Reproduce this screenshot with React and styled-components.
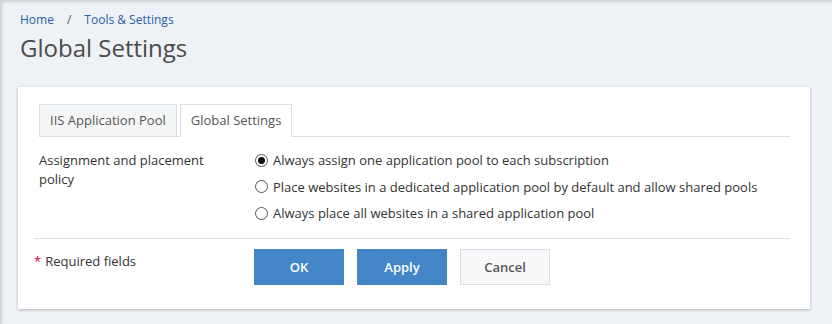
import React from 'react'
import styled, { createGlobalStyle } from 'styled-components'

const Global = createGlobalStyle`
  html, body { margin: 0; padding: 0; }
  body {
    background: #eef1f5;
    font-family: "Open Sans", "Noto Sans", sans-serif;
    font-size: 13px;
    color: #333;
  }
`

const Page = styled.div`
  width: 832px;
  height: 324px;
  box-sizing: border-box;
  padding: 12px 22px 0 18px;
  box-shadow: inset 2px 2px 3px rgba(0, 0, 0, 0.14);
`

const Crumbs = styled.div`
  display: flex;
  gap: 13px;
  padding-left: 2px;
  font-size: 12px;
  line-height: 16px;
  color: #2a60a3;
  span.sep { color: #555; }
`

const Title = styled.h1`
  margin: 3px 0 0 2px;
  font-size: 24px;
  font-weight: 400;
  line-height: 34px;
  color: #4b4b4b;
`

const Card = styled.div`
  margin-top: 22px;
  background: #fff;
  box-shadow: 0 1px 3px rgba(0, 0, 0, 0.25);
  padding: 17px 20px 0 21px;
  height: 222px;
  box-sizing: border-box;
`

const Tabs = styled.div`
  display: flex;
  gap: 3px;
  border-bottom: 1px solid #dcdfe4;
`

const Tab = styled.div`
  padding: 0 10px;
  height: 31px;
  line-height: 31px;
  border: 1px solid #dcdfe4;
  border-bottom: none;
  margin-bottom: -1px;
  background: ${p => (p.active ? '#fff' : '#f4f5f7')};
  color: #555;
  ${p => p.active && 'height: 32px;'}
`

const Row = styled.div`
  display: grid;
  grid-template-columns: 216px 1fr;
  padding-top: 14px;
`

const Label = styled.div`
  line-height: 19px;
  color: #333;
  width: 180px;
`

const Options = styled.div`
  display: flex;
  flex-direction: column;
  gap: 8.5px;
`

const Option = styled.label`
  display: flex;
  align-items: center;
  gap: 5px;
  line-height: 18px;
  color: #333;
`

const Radio = styled.span`
  width: 11px;
  height: 11px;
  border: 1px solid #555;
  border-radius: 50%;
  display: flex;
  align-items: center;
  justify-content: center;
  background: #fff;
  &::after {
    content: '';
    width: 7px;
    height: 7px;
    border-radius: 50%;
    background: ${p => (p.checked ? '#111' : 'transparent')};
  }
`

const Divider = styled.div`
  height: 1px;
  background: #dcdfe4;
  margin: 16px 0 0 -5px;
`

const Footer = styled.div`
  display: grid;
  grid-template-columns: 215px 1fr;
  padding-top: 10px;
`

const Required = styled.div`
  margin-left: -5px;
  padding-top: 3px;
  line-height: 18px;
  b { color: #d0021b; font-weight: 400; margin-right: 4px; }
`

const Buttons = styled.div`
  display: flex;
  gap: 13px;
`

const Button = styled.button`
  width: 90px;
  height: 36px;
  font-family: inherit;
  font-size: 13px;
  font-weight: 600;
  border: 1px solid ${p => (p.primary ? '#4286c7' : '#dcdfe4')};
  background: ${p => (p.primary ? '#4286c7' : '#f7f8fa')};
  color: ${p => (p.primary ? '#fff' : '#555')};
  cursor: pointer;
  padding: 0;
`

const options = [
  'Always assign one application pool to each subscription',
  'Place websites in a dedicated application pool by default and allow shared pools',
  'Always place all websites in a shared application pool',
]

export default function App() {
  return (
    <>
      <Global />
      <Page>
        <Crumbs>
          <span>Home</span>
          <span className="sep">/</span>
          <span>Tools &amp; Settings</span>
        </Crumbs>
        <Title>Global Settings</Title>
        <Card>
          <Tabs>
            <Tab>IIS Application Pool</Tab>
            <Tab active>Global Settings</Tab>
          </Tabs>
          <Row>
            <Label>Assignment and placement policy</Label>
            <Options>
              {options.map((o, i) => (
                <Option key={o}>
                  <Radio checked={i === 0} />
                  {o}
                </Option>
              ))}
            </Options>
          </Row>
          <Divider />
          <Footer>
            <Required><b>*</b>Required fields</Required>
            <Buttons>
              <Button primary>OK</Button>
              <Button primary>Apply</Button>
              <Button>Cancel</Button>
            </Buttons>
          </Footer>
        </Card>
      </Page>
    </>
  )
}
